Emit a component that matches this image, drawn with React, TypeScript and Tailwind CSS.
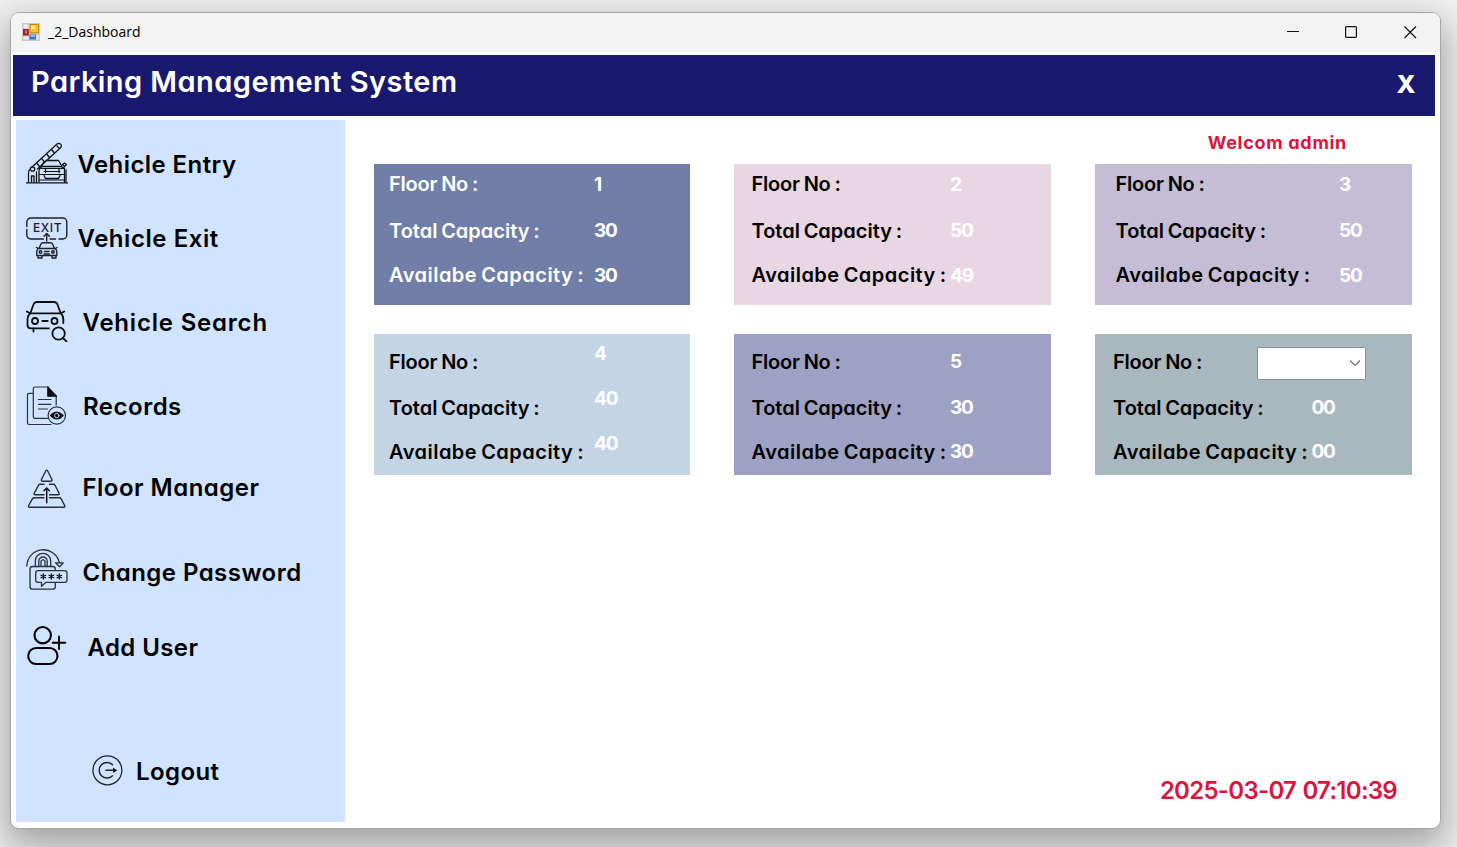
import React from "react";

const gothicFace = "font-['Inter','Liberation_Sans',sans-serif] whitespace-pre [font-feature-settings:'cv11']";
const gothic = `${gothicFace} font-semibold`;
const gothicBold = `${gothicFace} font-bold`;

function EntryIcon() {
  return (
    <svg width="42" height="43" viewBox="0 0 42 43" fill="none" stroke="#111" strokeWidth="1.3" strokeLinecap="round" strokeLinejoin="round">
      <path d="M0.5 40.800H41.5" />
      <path d="M5.5 25.5L31.6 1.6a2.6 2.6 0 0 1 3.4 3.6L11.5 27" />
      <path d="M11 21.5l2.5 3M16 17l2.5 3M21 12.5l2.5 3M26 8l2.5 3M31 4l2 2" />
      <circle cx="6.5" cy="27" r="2.2" />
      <path d="M2.5 40V31q0-3 2-4M10.500 40V30M5.500 40V34h2.500v6" />
      <path d="M13 40V29.500q0-3.500 3.500-5H34l4.500 1.500V40M20 18.500h12.500l3.500 6M17.500 20.500l-2 4" />
      <path d="M13.500 26.500h24.500M18 29.500h16M13.500 32.500h25M13.500 38h25" strokeWidth="1.1" />
      <path d="M19.500 27v3.500M33 27v3.500M18 33.500l1.500 3h13l1.500-3" />
      <path d="M36.500 22.500l2-1.500 2 1.500-2 2zM40 28v12" />
    </svg>
  );
}

function ExitIcon() {
  return (
    <svg width="42" height="42" viewBox="0 0 42 42" fill="none" stroke="#1b2129" strokeWidth="1.4" strokeLinecap="round" strokeLinejoin="round">
      <path d="M0.800 9.500V5a4 4 0 0 1 4-4h32a4 4 0 0 1 4 4v13a4 4 0 0 1-4 4H33M29.500 22H24M17.500 22H4.800a4 4 0 0 1-4-4v-5.500" />
      <text x="7" y="14.800" fontSize="12" letterSpacing="0.600" fontFamily="Inter, sans-serif" fontWeight="500" fill="#1b2129" stroke="none">EXIT</text>
      <path d="M20.700 24V17M18 19.300l2.700-2.800 2.700 2.800" />
      <path d="M13 31.500l2-4.500q.6-1.300 2-1.300h7.500q1.400 0 2 1.300l2 4.500" />
      <path d="M12 31.500h17.500l1.300 2.500v4.500h-20V34zM12 38.500v2.500h4v-2.500M26 38.500v2.500h4v-2.500M10.500 30.500l1.500 1M31 30.500l-1.500 1" />
      <circle cx="14.500" cy="35" r="1.300" /><circle cx="27" cy="35" r="1.300" />
      <path d="M18.500 34.500h4.500M18 37h5.500" />
    </svg>
  );
}

function SearchIcon() {
  return (
    <svg width="42" height="42" viewBox="0 0 42 42" fill="none" stroke="#0c0f14" strokeWidth="1.800" strokeLinecap="round" strokeLinejoin="round">
      <path d="M4.300 13.200l3.200-8.700Q8.500 2 11 2h17q2.500 0 3.500 2.500l3.200 8.700" />
      <path d="M4 13.300h31M0.800 11.500l3.200 1.800Q1.500 16 1.500 19v6q0 3.300 3.300 3.300H23M38.200 11.500L35 13.300q2.300 2.500 2.300 5.700v4" />
      <circle cx="9" cy="21" r="3" /><circle cx="28.500" cy="21" r="3" />
      <path d="M16.300 21h5.500M7.500 28.500v3" />
      <circle cx="32.600" cy="33.500" r="6.200" />
      <path d="M37 38l3.500 3.500" />
    </svg>
  );
}

function RecordsIcon() {
  return (
    <svg width="42" height="42" viewBox="0 0 42 42" fill="none" stroke="#2a323c" strokeWidth="1.2" strokeLinecap="round" strokeLinejoin="round">
      <path d="M7 7.300H3.200q-1.700 0-1.700 1.700v27.800q0 1.700 1.700 1.700H25" />
      <path d="M22 1H9q-1.700 0-1.700 1.700v28q0 1.700 1.700 1.700h12.500M30.200 10v9" />
      <path d="M21.800 1v9.200h8.700z" fill="#0b0e13" stroke="#0b0e13" />
      <path d="M12.500 13.500H25M12.500 18.300h12.500M12.500 23h9" />
      <circle cx="30.800" cy="29.500" r="8.700" />
      <path d="M24.500 29.500q6.300-7 12.600 0q-6.300 7-12.600 0z" fill="#0b0e13" stroke="#0b0e13" />
      <circle cx="30.800" cy="29.500" r="2.200" stroke="#d0e3ff" strokeWidth=".9" />
    </svg>
  );
}

function FloorIcon() {
  return (
    <svg width="42" height="42" viewBox="0 0 42 42" fill="none" stroke="#272e38" strokeWidth="1.400" strokeLinecap="round" strokeLinejoin="round">
      <path d="M19.800 1.800q.9-1.300 1.800 0l4.200 8.500q.7 2-1.300 2h-7.600q-2 0-1.300-2z" />
      <path d="M18 15.300h-4q-1 0-1.500 1L8.300 24q-.8 1.700 1 1.700H18M23.500 15.300h4q1 0 1.500 1l4 7.700q.8 1.700-1 1.700h-8.500" />
      <path d="M18 28.700H8q-1 0-1.500 1l-3.800 6.800q-.8 1.700 1 1.700h34q1.800 0 1-1.700l-3.700-6.800q-.5-1-1.500-1h-10" />
      <path d="M20.700 33.800V19.200M18 21.800l2.700-2.800 2.700 2.800" stroke="#11151b" strokeWidth="1.500" />
    </svg>
  );
}

function PasswordIcon() {
  return (
    <svg width="42" height="43" viewBox="0 0 42 43" fill="none" stroke="#2a323c" strokeWidth="1.300" strokeLinecap="round" strokeLinejoin="round">
      <path d="M.8 18a16.500 16.800 0 0 1 32.500-3.500" />
      <path d="M29.500 14.800h7.800l-3.800 4z" />
      <path d="M9.300 18.500v-5.500a7.700 7.700 0 0 1 15.400 0v5.500M12.800 18.500v-5.300a4.200 4.200 0 0 1 8.400 0v5.300M15 18.300v-4.500a2 2 0 0 1 4 0v4.500" />
      <path d="M29.300 22.500v-1.300q0-2.700-2.700-2.700H6.700Q4 18.500 4 21.200v17.300q0 2.700 2.700 2.700h19.900q2.700 0 2.700-2.700V34.800" />
      <path d="M12 22.700h26.700q2.300 0 2.300 2.300v7q0 2.300-2.300 2.300H20l-4.500 4v-4H12q-2.300 0-2.300-2.300v-7q0-2.300 2.300-2.300z" />
      <path d="M17.300 26v5M15 27.300l4.600 2.500M19.600 27.300L15 29.800M25.300 26v5M23 27.300l4.600 2.500M27.600 27.300L23 29.800M33.300 26v5M31 27.300l4.600 2.500M35.600 27.300L31 29.800" stroke="#0b0e13" />
    </svg>
  );
}

function AddUserIcon() {
  return (
    <svg width="42" height="42" viewBox="0 0 42 42" fill="none" stroke="#000" strokeWidth="2.100" strokeLinecap="round">
      <circle cx="16.700" cy="10.200" r="8.200" />
      <rect x="2.200" y="23" width="29.300" height="16" rx="8" />
      <path d="M33 11.500v12.500M26.700 17.700h12.600" strokeWidth="1.900" />
    </svg>
  );
}

function LogoutIcon() {
  return (
    <svg width="31" height="31" viewBox="0 0 31 31" fill="none" stroke="#20272f" strokeWidth="1.300" strokeLinecap="round">
      <circle cx="15.400" cy="15.300" r="14.500" />
      <path d="M20.500 9.800a7.800 7.800 0 1 0 0 11" strokeWidth="1.500" />
      <path d="M14 15.300h8" strokeWidth="1.500" />
      <path d="M21 12.700l4.300 2.600L21 17.900z" fill="#11151b" stroke="none" />
    </svg>
  );
}

function AppIcon() {
  return (
    <svg width="18" height="18" viewBox="0 0 18 18">
      <rect width="18" height="18" fill="#c9c9c9" />
      <path d="M1.500 1.500h5v4h-5zM1.500 13.500h5v3h-5zM14.500 12h2v4.500h-2z" fill="#ececec" />
      <rect x="7.500" y="1" width="9.500" height="9.300" fill="#c28a08" />
      <rect x="8.500" y="2" width="7.500" height="7.300" fill="#f7c52d" />
      <rect x="9" y="2.500" width="4" height="3.500" fill="#fde58a" />
      <rect x="1" y="6" width="5.800" height="6.500" fill="#b01c1c" />
      <rect x="3" y="7.500" width="2" height="3" fill="#e47a70" />
      <rect x="7.500" y="11.500" width="6.500" height="5" fill="#3b74d6" />
      <rect x="8.500" y="12" width="4.500" height="2" fill="#8db8f5" />
    </svg>
  );
}

const menu = [
  { label: "Vehicle Entry", icon: <EntryIcon />, row: "mt-[22px]", text: "ml-[9.5px] pt-1 tracking-[0.42px]" },
  { label: "Vehicle Exit", icon: <ExitIcon />, row: "mt-[33px]", text: "ml-[9.5px] pt-0.5 tracking-[0.55px]" },
  { label: "Vehicle Search", icon: <SearchIcon />, row: "mt-[41px]", text: "ml-[14.5px] pt-1 tracking-[0.8px]" },
  { label: "Records", icon: <RecordsIcon />, row: "mt-[44px]", text: "ml-[15px] tracking-[0.5px]" },
  { label: "Floor Manager", icon: <FloorIcon />, row: "mt-[41px]", text: "ml-[14.5px] pb-1 tracking-[0.48px]" },
  { label: "Change Password", icon: <PasswordIcon />, row: "mt-[37px]", text: "ml-[14.5px] pt-2 tracking-[0.45px]" },
  { label: "Add User", icon: <AddUserIcon />, row: "mt-[35px]", text: "ml-[19.5px] pt-1 tracking-[0.4px]" },
];

type Floor = {
  no: string;
  total: string;
  free: string;
  card: string;
  labels: string;
  values: string;
};

const upper = "pt-[5px] gap-[15.5px] [&>*:nth-child(2)]:pt-px [&>*:nth-child(2)]:-mb-px";
const upperValues = "pt-[6px] gap-[15.5px]";
const lower = "pt-[13px] gap-[15px] [&>*:nth-child(2)]:pt-px [&>*:nth-child(2)]:-mb-px";

const floors: Floor[] = [
  { no: "1", total: "30", free: "30", card: "w-[316px] bg-[#717ea7]", labels: `pl-[15px] w-[220px] text-white ${upper}`, values: upperValues },
  { no: "2", total: "50", free: "49", card: "w-[316.5px] bg-[#e8d6e3]", labels: `pl-[17.5px] w-[216px] ${upper}`, values: upperValues },
  { no: "3", total: "50", free: "50", card: "w-[317px] bg-[#c5bcd6]", labels: `pl-[20.5px] w-[244px] ${upper}`, values: upperValues },
  { no: "4", total: "40", free: "40", card: "w-[316px] bg-[#c3d4e4]", labels: `pl-[15px] w-[220px] ${lower}`, values: "pt-[5px] gap-[15px]" },
  { no: "5", total: "30", free: "30", card: "w-[316.5px] bg-[#9da1c3]", labels: `pl-[17.5px] w-[216px] ${lower}`, values: lower },
];

function Labels({ className }: { className: string }) {
  return (
    <div className={`flex shrink-0 flex-col text-[20px] leading-[30px] ${gothic} ${className}`}>
      <span className="tracking-[-0.2px] [word-spacing:-1px]">Floor No :</span>
      <span className="tracking-[0px] [word-spacing:-1.3px]">Total Capacity :</span>
      <span className="tracking-[0.48px] [word-spacing:-1.5px]">Availabe Capacity :</span>
    </div>
  );
}

function FloorCard({ floor }: { floor: Floor }) {
  return (
    <section className={`flex h-[141px] ${floor.card}`}>
      <Labels className={floor.labels} />
      <div className={`flex flex-col text-[19px] leading-[30px] tracking-[-1.2px] text-white ${gothicBold} ${floor.values}`}>
        <span>{floor.no}</span>
        <span>{floor.total}</span>
        <span>{floor.free}</span>
      </div>
    </section>
  );
}

function LookupCard() {
  return (
    <section className="flex h-[141px] w-[317px] bg-[#a9b7bf]">
      <Labels className={`w-[162px] pl-[18px] ${lower}`} />
      <div className="pt-[12.5px]">
        <div className="flex h-[33.5px] w-[108.5px] items-center justify-end rounded-[2px] border border-[#8a8f93] bg-white pr-1">
          <svg width="12" height="8" viewBox="0 0 12 8" fill="none" stroke="#6e6e6e" strokeWidth="1.200"><path d="M1 1.500l5 5 5-5" /></svg>
        </div>
        <div className={`flex flex-col gap-[14px] pl-[54.5px] pt-[13px] text-[19px] leading-[30px] tracking-[-1.2px] text-white ${gothicBold}`}>
          <span>00</span>
          <span>00</span>
        </div>
      </div>
    </section>
  );
}

export default function App() {
  return (
    <div className="h-[847px] w-[1457px] overflow-hidden bg-[#f0f0f0] pl-[10px] pt-[12px]">
      <div className="flex h-[817px] w-[1431px] flex-col overflow-hidden rounded-[9px] border border-[#a6a6a6] bg-white shadow-[0_14px_36px_4px_rgba(0,0,0,0.33)]">
        <div className="flex h-[39px] shrink-0 items-center bg-[#f3f3f3] pb-[2px] pl-[11px]">
          <AppIcon />
          <span className="ml-[8px] font-['Open_Sans','Noto_Sans',sans-serif] text-[14px] leading-[20px] text-black">_2_Dashboard</span>
          <svg className="ml-auto mr-[23px]" width="130" height="14" viewBox="0 0 130 14" fill="none" stroke="#111" strokeWidth="1.200">
            <path d="M0 6.500h12" />
            <rect x="58.600" y="1.600" width="10.800" height="10.800" rx="1" />
            <path d="M117.500 1.500l11.500 11.500M129 1.500l-11.500 11.500" />
          </svg>
        </div>
        <header className="ml-[2px] mr-[5px] mt-[3px] flex h-[61px] shrink-0 items-center justify-between bg-[#19196f] pl-[18px] pr-[19.5px] text-white">
          <h1 className={`pb-[7px] text-[29px] leading-[36px] tracking-[0.44px] ${gothic}`}>Parking Management System</h1>
          <button className="pb-[4px] font-['Inter','Liberation_Sans',sans-serif] text-[25px] font-extrabold leading-[36px]">X</button>
        </header>
        <div className="flex flex-1 pl-[5px] pt-[4px]">
          <nav className="h-[702px] w-[329px] shrink-0 bg-[#d0e3ff] pl-[10px]">
            {menu.map((item) => (
              <div key={item.label} className={`flex h-[42px] items-center ${item.row}`}>
                {item.icon}
                <span className={`text-[24px] leading-[30px] text-black ${gothic} ${item.text}`}>{item.label}</span>
              </div>
            ))}
            <div className="mt-[88px] flex h-[31px] items-center pl-[66px]">
              <LogoutIcon />
              <span className={`ml-[13px] pt-0.5 text-[24px] leading-[30px] tracking-[0.4px] text-black ${gothic}`}>Logout</span>
            </div>
          </nav>
          <main className="flex flex-1 flex-col pl-[29px] pr-[28px]">
            <p className={`flex h-[44px] justify-end pr-[65px] pt-[11px] text-[18px] leading-[24px] tracking-[0.7px] text-[#dc143c] ${gothicBold}`}>Welcom admin</p>
            <div className="grid grid-cols-[360px_361px_317px] gap-y-[29px]">
              {floors.map((floor) => (
                <FloorCard key={floor.no} floor={floor} />
              ))}
              <LookupCard />
            </div>
            <p className={`mb-[22px] mt-auto flex justify-end pr-[15px] text-[24px] leading-[30px] tracking-[-0.72px] [word-spacing:1px] text-[#dc143c] ${gothic}`}>2025-03-07 07:10:39</p>
          </main>
        </div>
      </div>
    </div>
  );
}
